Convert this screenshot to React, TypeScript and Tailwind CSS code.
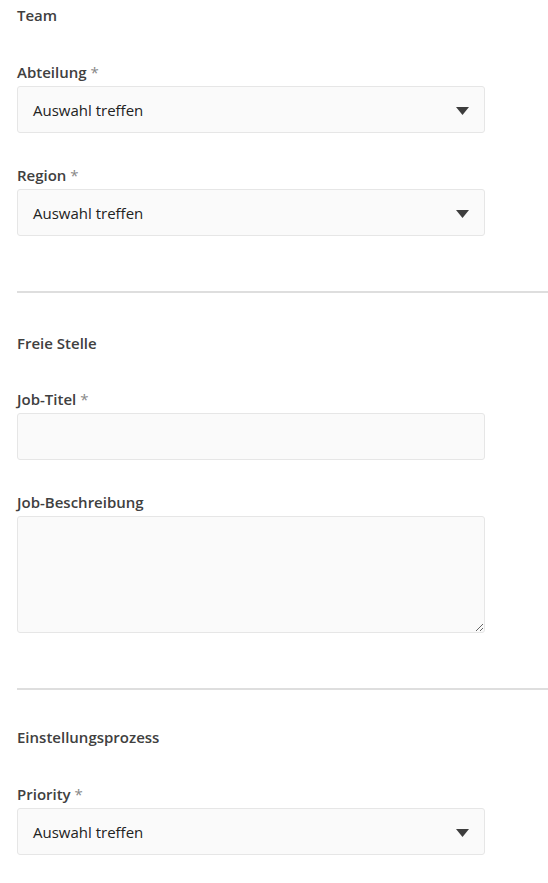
import React from "react";

function Label({ text, required }: { text: string; required?: boolean }) {
  return (
    <label className="block text-[15px] leading-[20px] font-semibold text-[#404040] mb-[4px]">
      {text}
      {required && <span className="font-normal text-[#888]"> *</span>}
    </label>
  );
}

function Select() {
  return (
    <div className="relative w-[468px] h-[47px] bg-[#fafafa] border border-[#e6e6e6] rounded-[3px] flex items-center px-[15px]">
      <span className="text-[15px] text-[#222] translate-y-[1px]">Auswahl treffen</span>
      <svg className="absolute right-[15px] top-[20px]" width="13" height="8" viewBox="0 0 13 8">
        <path d="M0 0 H13 L6.5 8 Z" fill="#3d3d3d" />
      </svg>
    </div>
  );
}

function SectionTitle({ text }: { text: string }) {
  return <h2 className="text-[15px] leading-[20px] font-semibold text-[#404040]">{text}</h2>;
}

export default function App() {
  return (
    <div className="bg-white min-h-screen pl-[17px] pt-[6px]" style={{ fontFamily: '"Open Sans", sans-serif' }}>
      <div className="-mt-[1px]">
        <SectionTitle text="Team" />
      </div>
      <div className="mt-[37px]">
        <Label text="Abteilung" required />
        <Select />
      </div>
      <div className="mt-[32px]">
        <Label text="Region" required />
        <Select />
      </div>

      <div className="mt-[55px] h-[2px] bg-[#dedede]" />

      <div className="mt-[40px]">
        <SectionTitle text="Freie Stelle" />
      </div>
      <div className="mt-[36px]">
        <Label text="Job-Titel" required />
        <input className="block w-[468px] h-[47px] bg-[#fafafa] border border-[#e6e6e6] rounded-[3px] px-[15px] text-[15px] outline-none" />
      </div>
      <div className="mt-[32px]">
        <Label text="Job-Beschreibung" />
        <textarea className="block w-[468px] h-[117px] bg-[#fafafa] border border-[#e6e6e6] rounded-[3px] px-[15px] py-[10px] text-[15px] outline-none" />
      </div>

      <div className="mt-[55px] h-[2px] bg-[#dedede]" />

      <div className="mt-[37px]">
        <SectionTitle text="Einstellungsprozess" />
      </div>
      <div className="mt-[37px]">
        <Label text="Priority" required />
        <Select />
      </div>
    </div>
  );
}
